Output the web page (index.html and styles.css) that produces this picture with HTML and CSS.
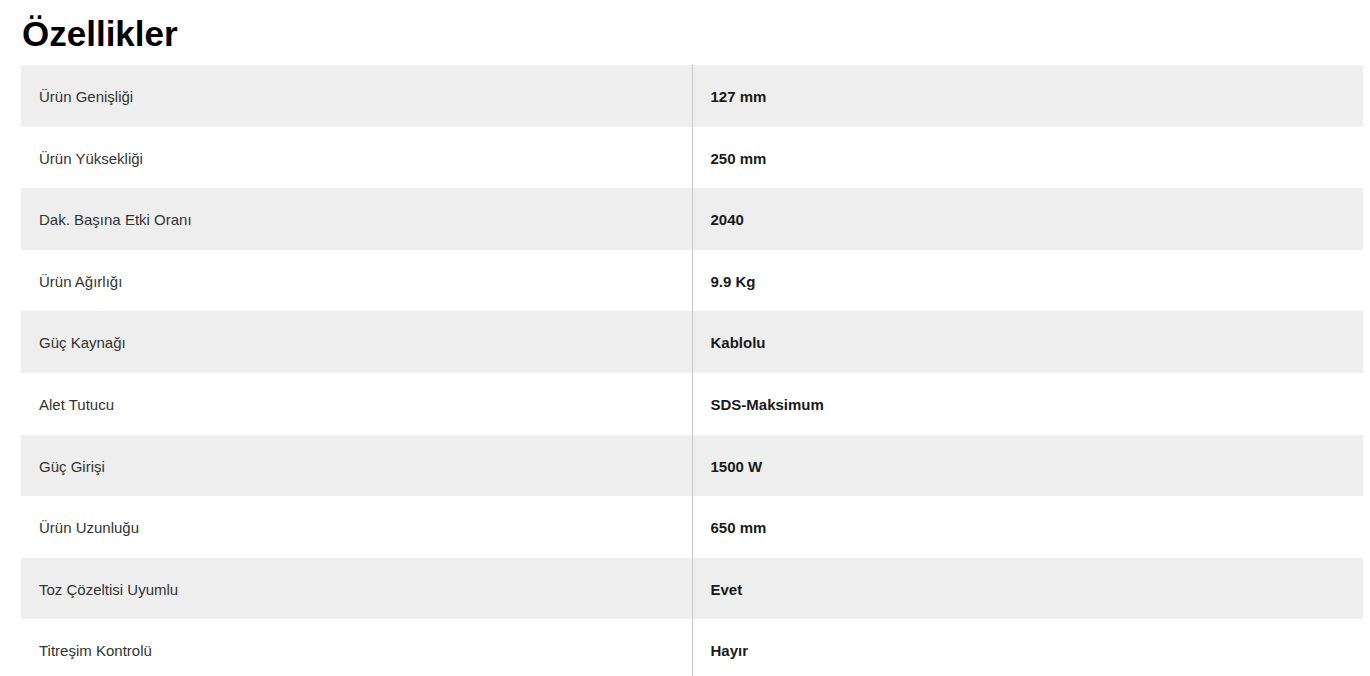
FILE: index.html
```html
<!DOCTYPE html>
<html lang="tr">
<head>
<meta charset="utf-8">
<title>Özellikler</title>
<link rel="stylesheet" href="styles.css">
</head>
<body>
<section class="specs">
  <h1 class="specs-title">Özellikler</h1>
  <table class="specs-table">
    <colgroup><col class="col-label"><col class="col-value"></colgroup>
    <tbody>
      <tr><td class="label">Ürün Genişliği</td><td class="value">127 mm</td></tr>
      <tr><td class="label">Ürün Yüksekliği</td><td class="value">250 mm</td></tr>
      <tr><td class="label">Dak. Başına Etki Oranı</td><td class="value">2040</td></tr>
      <tr><td class="label">Ürün Ağırlığı</td><td class="value">9.9 Kg</td></tr>
      <tr><td class="label">Güç Kaynağı</td><td class="value">Kablolu</td></tr>
      <tr><td class="label">Alet Tutucu</td><td class="value">SDS-Maksimum</td></tr>
      <tr><td class="label">Güç Girişi</td><td class="value">1500 W</td></tr>
      <tr><td class="label">Ürün Uzunluğu</td><td class="value">650 mm</td></tr>
      <tr><td class="label">Toz Çözeltisi Uyumlu</td><td class="value">Evet</td></tr>
      <tr><td class="label">Titreşim Kontrolü</td><td class="value">Hayır</td></tr>
    </tbody>
  </table>
</section>
</body>
</html>
```

FILE: styles.css
```css
html, body {
  margin: 0;
  padding: 0;
  background: #ffffff;
}

body {
  font-family: "Liberation Sans", Arial, sans-serif;
  color: #222222;
}

.specs {
  padding: 0 7px 0 21px;
}

.specs-title {
  margin: 0;
  padding: 14px 0 0 1px;
  height: 65px;
  box-sizing: border-box;
  font-size: 35px;
  line-height: 40px;
  font-weight: 700;
  color: #000000;
}

.specs-table {
  width: 100%;
  border-collapse: collapse;
  table-layout: fixed;
}

.col-label,
.col-value {
  width: 50%;
}

.specs-table tr:nth-child(odd) {
  background: #eeeeee;
}

.specs-table td {
  padding: 21px 18px 19px;
  height: 21.6px;
  line-height: 21.6px;
  font-size: 15px;
  vertical-align: middle;
}

.label {
  color: #333333;
}

.value {
  border-left: 1px solid #c8c8c8;
  font-weight: 700;
  color: #1a1a1a;
}
```
